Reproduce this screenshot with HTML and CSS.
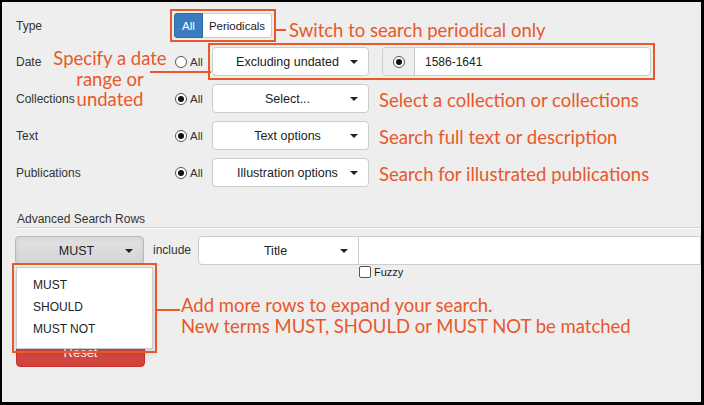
FILE: index.html
```html
<!DOCTYPE html>
<html>
<head>
<meta charset="utf-8">
<link rel="stylesheet" href="styles.css">
</head>
<body>
<div class="frame">
  <div class="form">
    <div class="row">
      <div class="label">Type</div>
      <div class="type-cell">
        <div class="btn-group boxed">
          <span class="btn btn-primary">All</span>
          <span class="btn btn-default">Periodicals</span>
        </div>
        <div class="note note-type"><span class="lead lead-type"></span><span>Switch to search periodical only</span></div>
      </div>
    </div>

    <div class="row row-date">
      <div class="label">Date</div>
      <div class="radio-cell"><span class="radio"></span><span>All</span></div>
      <div class="date-box boxed">
        <div class="select"><span class="sel-text">Excluding undated</span><span class="caret"></span></div>
        <div class="input-group">
          <span class="addon"><span class="radio checked"></span></span>
          <span class="input">1586-1641</span>
        </div>
      </div>
      <div class="note note-date">
        <span>Specify a date</span>
        <span>range or</span>
        <span>undated</span>
      </div>
      <span class="lead-date"></span>
    </div>

    <div class="row">
      <div class="label">Collections</div>
      <div class="radio-cell"><span class="radio checked"></span><span>All</span></div>
      <div class="select"><span class="sel-text">Select...</span><span class="caret"></span></div>
      <div class="note note-side">Select a collection or collections</div>
    </div>

    <div class="row">
      <div class="label">Text</div>
      <div class="radio-cell"><span class="radio checked"></span><span>All</span></div>
      <div class="select"><span class="sel-text">Text options</span><span class="caret"></span></div>
      <div class="note note-side">Search full text or description</div>
    </div>

    <div class="row">
      <div class="label">Publications</div>
      <div class="radio-cell"><span class="radio checked"></span><span>All</span></div>
      <div class="select"><span class="sel-text">Illustration options</span><span class="caret"></span></div>
      <div class="note note-side">Search for illustrated publications</div>
    </div>
  </div>

  <div class="adv-title">Advanced Search Rows</div>
  <div class="rule"></div>

  <div class="search-row">
    <div class="must-wrap">
      <div class="btn-must"><span class="sel-text">MUST</span><span class="caret"></span></div>
      <ul class="menu boxed">
        <li>MUST</li>
        <li>SHOULD</li>
        <li>MUST NOT</li>
      </ul>
      <div class="note note-menu">
        <span class="lead lead-menu"></span>
        <div class="note-lines">
          <span>Add more rows to expand your search.</span>
          <span>New terms MUST, SHOULD or MUST NOT be matched</span>
        </div>
      </div>
    </div>
    <div class="include">include</div>
    <div class="field-col">
      <div class="field-group">
        <div class="select select-title"><span class="sel-text">Title</span><span class="caret"></span></div>
        <div class="text-input"></div>
      </div>
      <label class="fuzzy"><span class="checkbox"></span>Fuzzy</label>
    </div>
  </div>

  <div class="reset-row">
    <span class="btn-reset">Reset</span>
  </div>
</div>
</body>
</html>
```

FILE: styles.css
```css
* { box-sizing: border-box; }
html, body { margin: 0; padding: 0; background: #000; }
body { width: 704px; height: 405px; overflow: hidden; }

.frame {
  width: 704px;
  height: 405px;
  border-style: solid;
  border-color: #000;
  border-width: 2px 3px 3px 2px;
  background: #eeeeee;
  font-family: "Liberation Sans", Arial, sans-serif;
  font-size: 12px;
  color: #333;
  padding: 8px 0 0 14px;
  position: relative;
}

.form { display: flex; flex-direction: column; gap: 8px; }

.row {
  display: grid;
  grid-template-columns: 157px 39px 157px auto;
  align-items: center;
  height: 29px;
  position: relative;
}

.type-cell {
  grid-column: 2 / 5;
  display: flex;
  align-items: center;
  padding-left: 1px;
}

.boxed { outline: 2px solid #e8582b; outline-offset: 2px; }

.btn-group { display: flex; height: 25px; }
.btn {
  display: flex; align-items: center; justify-content: center;
  height: 25px; font-size: 11.5px;
}
.btn-primary {
  width: 29px; background: #3a7cc0; color: #fff;
  border: 1px solid #2e6da4; border-radius: 3px 0 0 3px;
}
.btn-default {
  width: 69px; background: #fff; color: #222;
  border: 1px solid #ccc; border-left: none; border-radius: 0 3px 3px 0;
}

.note {
  font-family: Lato, "Open Sans", sans-serif;
  color: #e8582b;
  font-size: 18.5px;
  white-space: nowrap;
}
.lead { display: block; background: #e8582b; height: 2px; }

.note-type { display: flex; align-items: center; margin-top: 9px; }
.lead-type { width: 10px; margin: 0 3px 0 4px; }

.radio-cell { display: flex; align-items: center; gap: 3px; padding-left: 2px; font-size: 11.5px; }
.radio {
  width: 12px; height: 12px; border-radius: 50%;
  border: 1px solid #555; background: #fff;
  display: inline-flex; align-items: center; justify-content: center;
}
.radio.checked::after {
  content: ""; width: 6px; height: 6px; border-radius: 50%; background: #111;
}

.select {
  height: 29px;
  background: #fff;
  border: 1px solid #ccc;
  border-radius: 4px;
  display: flex;
  align-items: center;
  padding: 0 10px 0 12px;
  font-size: 12.5px;
  color: #222;
}
.sel-text { flex: 1; text-align: center; }
.caret {
  width: 0; height: 0;
  border-left: 4px solid transparent;
  border-right: 4px solid transparent;
  border-top: 4px solid #222;
}

.date-box {
  grid-column: 3 / 5;
  display: flex;
  gap: 13px;
  width: 439px;
}
.date-box .select { width: 157px; }
.input-group {
  flex: 1; display: flex; height: 29px;
  border: 1px solid #ccc; border-radius: 4px; background: #fff;
  overflow: hidden;
}
.addon {
  width: 32px; background: #eee; border-right: 1px solid #ccc;
  display: flex; align-items: center; justify-content: center;
}
.input { display: flex; align-items: center; padding-left: 10px; font-size: 12px; color: #222; }

.note-date {
  position: absolute;
  left: 36px; top: 1px;
  width: 116px;
  display: flex; flex-direction: column; align-items: center;
  line-height: 20.5px;
}
.lead-date {
  position: absolute;
  left: 134px; top: 24px;
  width: 61px; height: 2px;
  background: #e8582b;
  z-index: 2;
}

.note-side { padding-left: 10px; margin-top: 3px; }

.adv-title { margin-top: 25px; padding-left: 1px; }
.rule {
  margin-top: 1px;
  height: 2px;
  border-top: 1px solid #d6d6d6;
  border-bottom: 1px solid #fafafa;
  margin-left: 1px;
}

.search-row {
  display: flex;
  align-items: flex-start;
  margin-top: 7px;
}
.must-wrap { position: relative; width: 129px; margin-left: -1px; }
.btn-must {
  height: 29px;
  border: 1px solid #b9b9b9;
  border-radius: 4px;
  background: linear-gradient(#e3e3e3, #d4d4d4);
  display: flex; align-items: center;
  padding: 0 10px 0 12px;
  font-size: 12.5px; color: #222;
  box-shadow: inset 0 2px 4px rgba(0,0,0,0.08);
}
.menu {
  position: absolute;
  left: 1px; top: 31px;
  width: 137px; height: 82px;
  margin: 0; padding: 9px 0 0 16px;
  list-style: none;
  background: #fff;
  border: 1px solid #ccc;
  box-shadow: 0 4px 8px rgba(0,0,0,0.15);
  z-index: 3;
  font-size: 12px; color: #222;
}
.menu li { height: 22px; line-height: 16px; }

.note-menu {
  position: absolute;
  left: 142px; top: 59px;
  display: flex; align-items: flex-start;
  z-index: 3;
}
.lead-menu { width: 23px; margin-top: 14px; margin-right: 1px; }
.note-lines { display: flex; flex-direction: column; line-height: 21px; }

.include { padding: 0 7px 0 9px; line-height: 29px; font-size: 12px; }

.field-col { flex: 1; }
.field-group { display: flex; height: 29px; }
.select-title { width: 161px; border-radius: 4px 0 0 4px; }
.text-input {
  flex: 1; background: #fff; border: 1px solid #ccc; border-left: none;
}
.fuzzy {
  display: flex; align-items: center; gap: 3px;
  margin: 1px 0 0 161px; font-size: 11px; color: #222;
}
.checkbox {
  width: 12px; height: 12px; border: 1px solid #555; background: #fff; border-radius: 2px;
}

.reset-row { margin-top: 59px; padding-left: 0; }
.btn-reset {
  display: flex; align-items: center; justify-content: center;
  width: 129px; height: 30px;
  background: linear-gradient(#d9534f, #d2413c);
  border: 1px solid #c9302c;
  border-radius: 4px;
  color: #fff; font-size: 13px;
}
```
